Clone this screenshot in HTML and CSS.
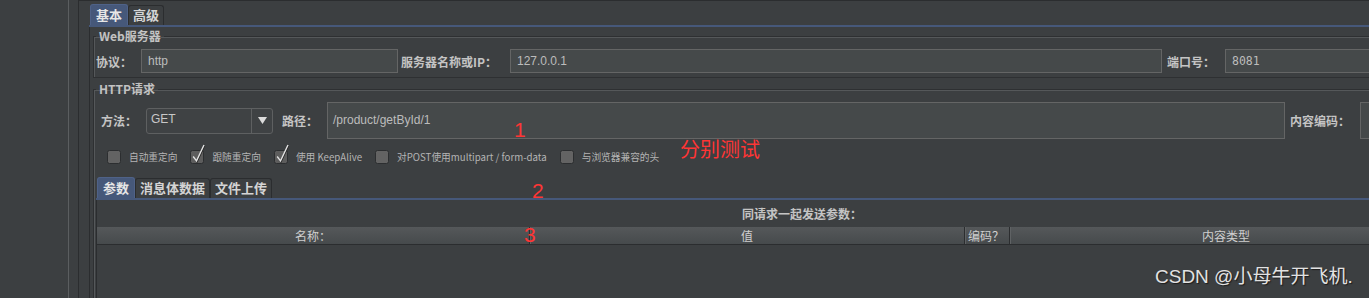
FILE: index.html
```html
<!DOCTYPE html>
<html lang="zh-CN">
<head>
<meta charset="utf-8">
<title>HTTP请求</title>
<link rel="stylesheet" href="styles.css">
</head>
<body>
<div class="app">
  <aside class="tree"></aside>
  <div class="split"></div>
  <section class="editor">
    <div class="tabs">
      <span class="tab active">基本</span><span class="tab">高级</span>
    </div>
    <div class="tabpanel">
      <fieldset class="group">
        <legend>Web服务器</legend>
        <div class="row row-web">
          <span class="lbl w-proto">协议：</span>
          <div class="field w-proto-f">http</div>
          <span class="lbl w-host">服务器名称或IP：</span>
          <div class="field w-host-f">127.0.0.1</div>
          <span class="lbl w-port">端口号：</span>
          <div class="field w-port-f mono">8081</div>
        </div>
      </fieldset>
      <fieldset class="group group-http">
        <legend>HTTP请求</legend>
        <div class="row row-http">
          <span class="lbl w-method">方法：</span>
          <div class="combo">
            <span class="combo-val">GET</span>
            <span class="combo-arrow"><svg width="9" height="7" viewBox="0 0 9 7"><path d="M0 0 H9 L4.5 7 Z" fill="#dcdcdc"/></svg></span>
          </div>
          <span class="lbl w-path">路径：</span>
          <div class="field w-path-f">/product/getById/1</div>
          <span class="lbl w-enc">内容编码：</span>
          <div class="field w-enc-f"></div>
        </div>
        <div class="checks">
          <span class="chk"><svg class="box" width="14" height="14" viewBox="0 0 14 14"><rect x="0.5" y="0.5" width="13" height="13" rx="2" fill="#636363" stroke="#2c2e30"/></svg>自动重定向</span>
          <span class="chk"><svg class="box" width="14" height="14" viewBox="0 0 14 14"><rect x="0.5" y="0.5" width="13" height="13" rx="2" fill="#5d5d5d" stroke="#2c2e30"/><path d="M4 7.5 L7 12 L14.5 -4" fill="none" stroke="#262626" stroke-width="1.3"/><path d="M3.2 6.5 L6.5 11 L14 -5" fill="none" stroke="#e4e4e4" stroke-width="1.4"/></svg>跟随重定向</span>
          <span class="chk"><svg class="box" width="14" height="14" viewBox="0 0 14 14"><rect x="0.5" y="0.5" width="13" height="13" rx="2" fill="#5d5d5d" stroke="#2c2e30"/><path d="M4 7.5 L7 12 L14.5 -4" fill="none" stroke="#262626" stroke-width="1.3"/><path d="M3.2 6.5 L6.5 11 L14 -5" fill="none" stroke="#e4e4e4" stroke-width="1.4"/></svg>使用 KeepAlive</span>
          <span class="chk"><svg class="box" width="14" height="14" viewBox="0 0 14 14"><rect x="0.5" y="0.5" width="13" height="13" rx="2" fill="#636363" stroke="#2c2e30"/></svg>对POST使用multipart / form-data</span>
          <span class="chk"><svg class="box" width="14" height="14" viewBox="0 0 14 14"><rect x="0.5" y="0.5" width="13" height="13" rx="2" fill="#636363" stroke="#2c2e30"/></svg>与浏览器兼容的头</span>
        </div>
        <div class="subtabs">
          <span class="tab active">参数</span><span class="tab">消息体数据</span><span class="tab">文件上传</span>
        </div>
        <div class="subpanel">
          <div class="caption">同请求一起发送参数：</div>
          <div class="thead">
            <span class="th c1">名称：</span>
            <span class="th c2">值</span>
            <span class="th c3">编码？</span>
            <span class="th c4">内容类型</span>
          </div>
          <div class="tbody"></div>
        </div>
      </fieldset>
    </div>
  </section>

  <span class="note n1">1</span>
  <span class="note n2">2</span>
  <span class="note n3">3</span>
  <span class="note n4">分别测试</span>
  <span class="watermark">CSDN @小母牛开飞机.</span>
</div>
</body>
</html>
```

FILE: styles.css
```css
html, body {
  margin: 0;
  padding: 0;
}
body {
  background: #3c3f41;
  width: 1369px;
  height: 298px;
  overflow: hidden;
  font-family: "Noto Sans CJK SC", "Liberation Sans", sans-serif;
  color: #bbbbbb;
}
.app {
  position: relative;
  display: flex;
  height: 298px;
  overflow: hidden;
}
.tree {
  flex: none;
  width: 68px;
  border-right: 1px solid #5b5e60;
}
.split {
  flex: none;
  width: 9px;
  border-right: 1px solid #2b2d2f;
}
.editor {
  flex: none;
  width: 1480px;
  padding: 3px 0 0 10px;
  border-top: 1px solid #2b2d2f;
}

/* tabs */
.tabs, .subtabs {
  display: flex;
  align-items: flex-end;
  height: 21px;
  border-bottom: 2px solid #46587a;
  padding-left: 1px;
}
.tab {
  box-sizing: border-box;
  height: 20px;
  line-height: 18px;
  padding: 0 4px;
  font-size: 13px;
  font-weight: bold;
  color: #d4d4d4;
  border: 1px solid #2b2d2f;
  border-bottom: none;
  border-radius: 3px 3px 0 0;
  background: #3c3f41;
}
.tab.active {
  height: 21px;
  line-height: 19px;
  background: #46587a;
  border-color: #4f6288;
  color: #e6e6e6;
  padding: 0 5px;
}
.tabpanel {
  border-left: 1px solid #2b2d2f;
  padding: 1px 0 0 3px;
}

/* fieldsets */
.group {
  margin: 0;
  padding: 5px 0 4px 2px;
  border: 1px solid #2e3032;
  box-shadow: inset 1px 1px 0 #55585a;
  min-width: 0;
}
.group legend {
  padding: 0 3px;
  font-size: 12px;
  line-height: 16px;
  font-weight: bold;
  color: #c2c2c2;
}
.group-http {
  margin-top: 3px;
  padding-bottom: 0;
  border-bottom: none;
}

.row {
  display: flex;
  align-items: center;
}
.row-web { height: 24px; }
.row-http { height: 37px; padding-left: 5px; }

.lbl {
  flex: none;
  font-size: 12px;
  font-weight: bold;
  color: #c4c4c4;
  white-space: nowrap;
}
.w-proto { width: 45px; }
.w-host { width: 109px; margin-left: 3px; }
.w-port { width: 58px; margin-left: 5px; }
.w-method { width: 45px; }
.w-path { width: 45px; margin-left: 9px; }
.w-enc { width: 70px; margin-left: 5px; }

.field {
  flex: none;
  box-sizing: border-box;
  height: 24px;
  border: 1px solid #646565;
  background: #45494a;
  padding-left: 6px;
  font-family: "Liberation Sans", sans-serif;
  font-size: 12px;
  line-height: 22px;
  color: #bcbcbc;
}
.mono { font-family: "DejaVu Sans Mono", monospace; font-size: 11.5px; }
.w-proto-f { width: 257px; }
.w-host-f { width: 652px; }
.w-port-f { width: 200px; }
.w-path-f { width: 958px; height: 37px; line-height: 35px; padding-left: 5px; }
.w-enc-f { width: 100px; height: 37px; }

.combo {
  flex: none;
  box-sizing: border-box;
  display: flex;
  width: 127px;
  height: 26px;
  border: 1px solid #5e6061;
  border-radius: 3px;
  background: #3f4244;
}
.combo-val {
  flex: 1;
  padding-left: 4px;
  font-family: "Liberation Sans", sans-serif;
  font-size: 12px;
  line-height: 20px;
  color: #c8c8c8;
}
.combo-arrow {
  width: 20px;
  border-left: 1px solid #5e6061;
  display: flex;
  align-items: center;
  justify-content: center;
}

/* checkboxes */
.checks {
  display: flex;
  align-items: center;
  height: 16px;
  margin-top: 10px;
  padding-left: 11px;
  gap: 13px;
}
.chk {
  display: flex;
  align-items: center;
  gap: 8px;
  font-size: 9.7px;
  color: #b4b4b4;
  white-space: nowrap;
}
.box { flex: none; overflow: visible; }

/* sub tabs */
.subtabs {
  margin-top: 12px;
  padding-left: 1px;
}
.subpanel {
  width: 1410px;
  border-left: 1px solid #2b2d2f;
  height: 120px;
}
.caption {
  height: 27px;
  line-height: 27px;
  text-align: center;
  font-size: 12px;
  font-weight: bold;
  color: #c4c4c4;
}
.thead {
  display: flex;
  height: 17px;
  border-bottom: 1px solid #2b2d2f;
  background: linear-gradient(#55585a, #464a4c);
}
.th {
  box-sizing: border-box;
  flex: none;
  text-align: center;
  font-size: 12px;
  line-height: 17px;
  color: #cfcfcf;
  border-right: 1px solid #2b2d2f;
  box-shadow: 1px 0 0 #5f6264;
}
.c1 { width: 433px; }
.c2 { width: 435px; }
.c3 { width: 45px; text-align: left; padding-left: 3px; }
.c4 { width: 433px; }
.tbody { height: 60px; }

/* overlays */
.note {
  position: absolute;
  color: #ff3535;
  font-family: "Liberation Sans", "Noto Sans CJK SC", sans-serif;
  font-size: 21px;
  line-height: 21px;
}
.n1 { left: 514px; top: 119px; }
.n2 { left: 532px; top: 180px; }
.n3 { left: 524px; top: 224px; }
.n4 {
  left: 680px;
  top: 138px;
  font-family: "Noto Sans CJK SC", sans-serif;
  font-size: 20px;
  line-height: 22px;
}
.watermark {
  position: absolute;
  left: 1155px;
  top: 266px;
  font-family: "Liberation Sans", "Noto Sans CJK SC", sans-serif;
  font-size: 19px;
  line-height: 22px;
  color: #e2e2e2;
  text-shadow: 1px 1px 1px #1c1c1c;
  white-space: nowrap;
}
```
